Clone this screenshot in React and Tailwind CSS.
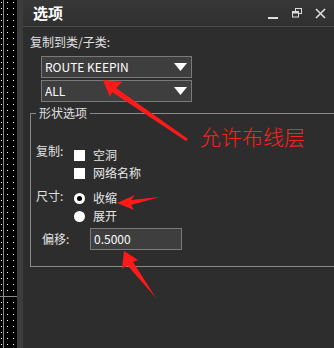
import React from 'react';

const font = { fontFamily: '"Noto Sans CJK SC", "Liberation Sans", sans-serif' };

const Dots = () => (
  <svg width="17" height="348" className="block">
    <defs>
      <pattern id="dots" width="6" height="6" patternUnits="userSpaceOnUse">
        <rect x="1" y="2" width="1" height="1" fill="#fff" />
      </pattern>
    </defs>
    <rect width="17" height="348" fill="#000" />
    <rect width="17" height="348" fill="url(#dots)" />
    <rect x="3" y="0" width="1" height="348" fill="#8a8a8a" />
    <rect x="0" y="296" width="17" height="1" fill="#8a8a8a" />
  </svg>
);

const Select = ({ value }) => (
  <div className="w-[151px] h-[22px] bg-[#3e3e3e] border border-[#7a7a7a] flex items-center justify-between pl-[3px] pr-[4px]">
    <span className="text-[12px] text-white leading-none">{value}</span>
    <svg width="13" height="8" viewBox="0 0 13 8">
      <polygon points="0,0 13,0 6.5,8" fill="#fff" />
    </svg>
  </div>
);

const Check = ({ label }) => (
  <div className="flex items-center gap-[8px] h-[18px]">
    <div className="w-[11px] h-[11px] bg-white" />
    <span className="text-[12px] text-[#e6e6e6]">{label}</span>
  </div>
);

const Radio = ({ label, on }) => (
  <div className="flex items-center gap-[8px] h-[18px]">
    <div className="w-[11px] h-[11px] rounded-full bg-white flex items-center justify-center">
      {on && <div className="w-[5px] h-[5px] rounded-full bg-black" />}
    </div>
    <span className="text-[12px] text-[#e6e6e6]">{label}</span>
  </div>
);

export default function App() {
  return (
    <div className="relative w-[334px] h-[348px] overflow-hidden flex bg-[#2d2d2d]" style={font}>
      <Dots />
      <div className="w-[6px] bg-[#3c3c3c]" />
      <div className="flex-1 flex flex-col">
        {/* Title bar */}
        <div className="h-[27px] flex items-center justify-between bg-gradient-to-b from-[#383838] to-[#303030] border-b border-[#4a4a4a] pl-[10px] pr-[8px]">
          <span className="text-[15px] font-bold text-white">选项</span>
          <div className="flex items-center gap-[13px] text-white">
            <svg width="11" height="11" viewBox="0 0 11 11">
              <rect x="0" y="9" width="10" height="2" fill="#ddd" />
            </svg>
            <svg width="10" height="10" viewBox="0 0 10 10">
              <rect x="3.5" y="0.5" width="6" height="5" fill="none" stroke="#ddd" />
              <rect x="0.5" y="3.5" width="6" height="5.5" fill="#333" stroke="#ddd" />
              <rect x="1" y="4" width="5" height="1.5" fill="#ddd" />
            </svg>
            <svg width="11" height="11" viewBox="0 0 11 11">
              <path d="M1 1 L10 10 M10 1 L1 10" stroke="#ddd" strokeWidth="1.6" />
            </svg>
          </div>
        </div>

        <div className="pl-[7px] pt-[8px]">
          <div className="text-[12px] text-[#e0e0e0] leading-[14px]">复制到类/子类:</div>
          <div className="pl-[11px] pt-[7px] flex flex-col gap-[2px]">
            <Select value="ROUTE KEEPIN" />
            <Select value="ALL" />
          </div>

          {/* group box */}
          <div className="relative mt-[11px] -mr-[10px] h-[154px] border border-[#8a8a8a] pl-[5px]">
            <span className="absolute -top-[9px] left-[5px] px-[3px] bg-[#2d2d2d] text-[12px] text-[#e0e0e0] leading-[16px]">
              形状选项
            </span>
            <div className="pt-[28px] flex">
              <div className="w-[38px] text-[12px] text-[#e0e0e0]">复制:</div>
              <div className="flex flex-col pt-[4px]">
                <Check label="空洞" />
                <Check label="网络名称" />
              </div>
            </div>
            <div className="pt-[5px] flex">
              <div className="w-[38px] text-[12px] text-[#e0e0e0]">尺寸:</div>
              <div className="flex flex-col pt-[2px]">
                <Radio label="收缩" on />
                <Radio label="展开" />
              </div>
            </div>
            <div className="pt-[3px] flex items-center">
              <div className="w-[54px] pl-[6px] text-[12px] text-[#e0e0e0]">偏移:</div>
              <div className="w-[92px] h-[22px] bg-[#3e3e3e] border border-[#7a7a7a] flex items-center pl-[3px] text-[12px] text-white">
                0.5000
              </div>
            </div>
          </div>
        </div>
      </div>

      {/* red annotations */}
      <svg className="absolute inset-0 pointer-events-none" width="334" height="348">
        <polygon points="103,80 122,82 116,88 188,139 186,141 112,92 110,97" fill="#ff1a1a" />
        <polygon points="117,203 135,195 131,200 160,197 131,205 134,210" fill="#ff1a1a" />
        <polygon points="124,251 138,260 133,262 156,298 128,266 122,268" fill="#ff1a1a" />
      </svg>
      <div className="absolute left-[200px] top-[123px] text-[21px] font-light text-[#ff2020] leading-[26px]">允许布线层</div>
    </div>
  );
}
